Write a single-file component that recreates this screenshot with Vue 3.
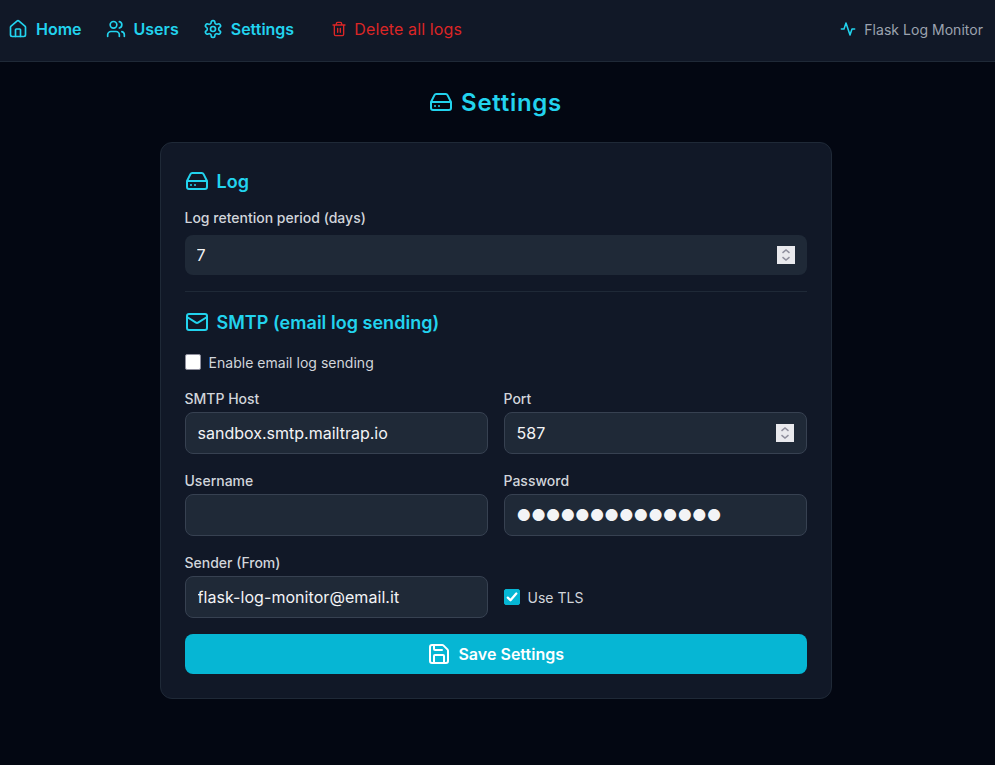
<script setup>
import { ref } from 'vue'

const retention = ref('7')
const host = ref('sandbox.smtp.mailtrap.io')
const port = ref('587')
const username = ref('')
const sender = ref('flask-log-monitor@email.it')
const enabled = ref(false)
const tls = ref(true)
const masked = '●'.repeat(14)
</script>

<template>
  <div class="page">
    <header class="bar">
      <nav class="nav">
        <a class="link">
          <svg class="icon i20" viewBox="0 0 24 24"><path d="M15 21v-8a1 1 0 0 0-1-1h-4a1 1 0 0 0-1 1v8" /><path d="M3 10a2 2 0 0 1 .709-1.528l7-5.999a2 2 0 0 1 2.582 0l7 5.999A2 2 0 0 1 21 10v9a2 2 0 0 1-2 2H5a2 2 0 0 1-2-2z" /></svg>
          Home
        </a>
        <a class="link">
          <svg class="icon i20" viewBox="0 0 24 24"><path d="M16 21v-2a4 4 0 0 0-4-4H6a4 4 0 0 0-4 4v2" /><circle cx="9" cy="7" r="4" /><path d="M22 21v-2a4 4 0 0 0-3-3.87M16 3.13a4 4 0 0 1 0 7.75" /></svg>
          Users
        </a>
        <a class="link">
          <svg class="icon i20" viewBox="0 0 24 24"><path d="M12.22 2h-.44a2 2 0 0 0-2 2v.18a2 2 0 0 1-1 1.73l-.43.25a2 2 0 0 1-2 0l-.15-.08a2 2 0 0 0-2.73.73l-.22.38a2 2 0 0 0 .73 2.73l.15.1a2 2 0 0 1 1 1.72v.51a2 2 0 0 1-1 1.74l-.15.09a2 2 0 0 0-.73 2.73l.22.38a2 2 0 0 0 2.73.73l.15-.08a2 2 0 0 1 2 0l.43.25a2 2 0 0 1 1 1.73V20a2 2 0 0 0 2 2h.44a2 2 0 0 0 2-2v-.18a2 2 0 0 1 1-1.73l.43-.25a2 2 0 0 1 2 0l.15.08a2 2 0 0 0 2.73-.73l.22-.39a2 2 0 0 0-.73-2.73l-.15-.08a2 2 0 0 1-1-1.74v-.5a2 2 0 0 1 1-1.74l.15-.09a2 2 0 0 0 .73-2.73l-.22-.38a2 2 0 0 0-2.73-.73l-.15.08a2 2 0 0 1-2 0l-.43-.25a2 2 0 0 1-1-1.73V4a2 2 0 0 0-2-2z" /><circle cx="12" cy="12" r="3" /></svg>
          Settings
        </a>
        <a class="link danger">
          <svg class="icon i16" viewBox="0 0 24 24"><path d="M3 6h18M19 6v14a2 2 0 0 1-2 2H7a2 2 0 0 1-2-2V6M8 6V4a2 2 0 0 1 2-2h4a2 2 0 0 1 2 2v2M10 11v6M14 11v6" /></svg>
          Delete all logs
        </a>
      </nav>
      <div class="brand">
        <svg class="icon i16" viewBox="0 0 24 24"><path d="M22 12h-4l-3 9L9 3l-3 9H2" /></svg>
        <span>Flask Log Monitor</span>
      </div>
    </header>

    <main class="main">
      <h1 class="title">
        <svg class="icon i24" viewBox="0 0 24 24"><path d="M22 12H2M5.45 5.11 2 12v6a2 2 0 0 0 2 2h16a2 2 0 0 0 2-2v-6l-3.45-6.89A2 2 0 0 0 16.76 4H7.24a2 2 0 0 0-1.79 1.11zM6 16h.01M10 16h.01" /></svg>
        <span>Settings</span>
      </h1>

      <form class="card" @submit.prevent>
        <section class="log">
          <h2 class="heading">
            <svg class="icon i24" viewBox="0 0 24 24"><path d="M22 12H2M5.45 5.11 2 12v6a2 2 0 0 0 2 2h16a2 2 0 0 0 2-2v-6l-3.45-6.89A2 2 0 0 0 16.76 4H7.24a2 2 0 0 0-1.79 1.11zM6 16h.01M10 16h.01" /></svg>
            <span class="text">Log</span>
          </h2>
          <label class="label wide" for="retention">Log retention period (days)</label>
          <div class="control plain">
            <input id="retention" v-model="retention" class="input" />
            <span class="stepper"><svg viewBox="0 0 18 18"><path d="M5.5 6.8 9 3.9l3.5 2.9M5.5 11.2 9 14.1l3.5-2.9" /></svg></span>
          </div>
        </section>

        <section class="smtp">
          <h2 class="heading">
            <svg class="icon i24" viewBox="0 0 24 24"><rect x="2" y="4" width="20" height="16" rx="2" /><path d="m22 7-8.97 5.7a1.94 1.94 0 0 1-2.06 0L2 7" /></svg>
            <span class="text">SMTP (email log sending)</span>
          </h2>
          <label class="check">
            <span class="box"><input v-model="enabled" type="checkbox" /></span>
            <span class="text">Enable email log sending</span>
          </label>
          <div class="grid">
            <div>
              <label class="label" for="host">SMTP Host</label>
              <div class="control"><input id="host" v-model="host" class="input" /></div>
            </div>
            <div>
              <label class="label" for="port">Port</label>
              <div class="control">
                <input id="port" v-model="port" class="input" />
                <span class="stepper"><svg viewBox="0 0 18 18"><path d="M5.5 6.8 9 3.9l3.5 2.9M5.5 11.2 9 14.1l3.5-2.9" /></svg></span>
              </div>
            </div>
            <div>
              <label class="label" for="username">Username</label>
              <div class="control"><input id="username" v-model="username" class="input" /></div>
            </div>
            <div>
              <label class="label">Password</label>
              <div class="control"><span class="masked">{{ masked }}</span></div>
            </div>
            <div>
              <label class="label" for="sender">Sender (From)</label>
              <div class="control"><input id="sender" v-model="sender" class="input sender" /></div>
            </div>
            <label class="check tls">
              <span class="box">
                <input v-model="tls" type="checkbox" />
                <svg v-if="tls" viewBox="0 0 16 16"><path d="m3.8 8.6 2.7 2.7 5.8-6.8" /></svg>
              </span>
              <span class="text">Use TLS</span>
            </label>
          </div>
        </section>

        <button class="save" type="submit">
          <svg class="icon i24" viewBox="0 0 24 24"><path d="M15.2 3a2 2 0 0 1 1.4.6l3.8 3.8a2 2 0 0 1 .6 1.4V19a2 2 0 0 1-2 2H5a2 2 0 0 1-2-2V5a2 2 0 0 1 2-2z" /><path d="M17 21v-7a1 1 0 0 0-1-1H8a1 1 0 0 0-1 1v7M7 3v4a1 1 0 0 0 1 1h7" /></svg>
          Save Settings
        </button>
      </form>
    </main>
  </div>
</template>

<style>
body {
  background: #030712;
}
</style>

<style scoped>
.page {
  min-height: 765px;
  box-sizing: border-box;
  background: #030712;
  color: #f3f4f6;
  font: 16px/24px Inter, "Liberation Sans", sans-serif;
}
.page * {
  box-sizing: border-box;
}
.icon {
  flex: none;
  fill: none;
  stroke: currentColor;
  stroke-width: 2;
  stroke-linecap: round;
  stroke-linejoin: round;
}
.i16 { width: 16px; height: 16px; }
.i20 { width: 20px; height: 20px; }
.i24 { width: 24px; height: 24px; }
.bar {
  display: flex;
  justify-content: space-between;
  height: 62px;
  padding: 0 12px 3px 8px;
  background: #111827;
  border-bottom: 1px solid #1f2937;
}
.nav {
  display: flex;
  align-items: center;
  gap: 24px;
}
.link {
  display: flex;
  align-items: center;
  gap: 8px;
  color: #22d3ee;
  font-weight: 600;
}
.danger {
  gap: 7.6px;
  margin-left: 12.6px;
  color: #dc2626;
  font-weight: 400;
  letter-spacing: 0.11px;
}
.brand {
  display: flex;
  align-items: center;
  gap: 8px;
  color: #9ca3af;
  font-size: 14px;
  letter-spacing: 0.03px;
}
.brand span {
  padding-top: 2px;
}
.brand .icon {
  color: #22d3ee;
  stroke-width: 2.3;
}
.main {
  width: 992px;
  padding-top: 24px;
}
.title {
  display: flex;
  justify-content: center;
  align-items: center;
  gap: 8px;
  margin: 0 0 24px;
  padding-right: 1px;
  color: #22d3ee;
  font-size: 24px;
  line-height: 32px;
  font-weight: 600;
  letter-spacing: 0.7px;
}
.title span {
  padding-top: 1px;
  margin-bottom: -1px;
}
.card {
  width: 672px;
  margin: 0 auto;
  padding: 24px;
  background: #111827;
  border: 1px solid #1f2937;
  border-radius: 12px;
}
.log {
  padding-bottom: 16px;
  border-bottom: 1px solid #1f2937;
}
.smtp {
  padding: 16px 0;
}
.heading {
  display: flex;
  align-items: center;
  gap: 8px;
  height: 28px;
  margin: 0 0 12px;
  color: #22d3ee;
  font-size: 18px;
  line-height: 28px;
  font-weight: 600;
  letter-spacing: 0.03px;
}
.text {
  padding-top: 2px;
  margin-left: -0.5px;
}
.smtp .heading {
  margin-bottom: 16px;
}
.label {
  display: block;
  height: 20px;
  padding-top: 1px;
  margin-bottom: 4px;
  color: #d1d5db;
  font-size: 14px;
  line-height: 20px;
  font-weight: 500;
  text-indent: -0.5px;
}
.wide {
  margin-bottom: 8px;
}
.control {
  display: flex;
  align-items: center;
  height: 42px;
  padding: 0 12px 0 11.5px;
  background: #1f2937;
  border: 1px solid #374151;
  border-radius: 8px;
}
.plain {
  height: 40px;
  border: 0;
}
.input {
  flex: 1;
  min-width: 0;
  height: 24px;
  padding: 0;
  border: 0;
  outline: 0;
  background: transparent;
  color: #f3f4f6;
  font: inherit;
}
.sender {
  letter-spacing: 0.06px;
}
.stepper {
  flex: none;
  width: 18px;
  height: 18px;
  background: #e9e9ed;
}
.stepper svg {
  display: block;
  fill: none;
  stroke: #8f8f9d;
  stroke-width: 1.5;
}
.masked {
  white-space: nowrap;
}
.grid {
  display: grid;
  grid-template-columns: 1fr 1fr;
  gap: 16px;
  margin-top: 16px;
}
.check {
  display: flex;
  align-items: center;
  gap: 8px;
  height: 20px;
  color: #d1d5db;
  font-size: 14px;
  line-height: 20px;
  letter-spacing: 0.03px;
}
.tls {
  margin-top: 35px;
}
.box {
  display: grid;
  width: 16px;
  height: 16px;
}
.box > * {
  grid-area: 1 / 1;
}
.box input {
  appearance: none;
  width: 16px;
  height: 16px;
  margin: 0;
  background: #fff;
  border: 1px solid #8f8f9d;
  border-radius: 2px;
}
.box input:checked {
  background: #06b6d4;
  border-color: #06b6d4;
}
.box svg {
  z-index: 1;
  fill: none;
  stroke: #fff;
  stroke-width: 2.3;
  stroke-linecap: round;
  stroke-linejoin: round;
  pointer-events: none;
}
.save {
  display: flex;
  justify-content: center;
  align-items: center;
  gap: 7.5px;
  width: 100%;
  height: 40px;
  padding: 0 1px 0 0;
  border: 0;
  border-radius: 8px;
  background: #06b6d4;
  color: #fff;
  font: inherit;
  font-weight: 600;
  letter-spacing: 0.03px;
}
</style>
